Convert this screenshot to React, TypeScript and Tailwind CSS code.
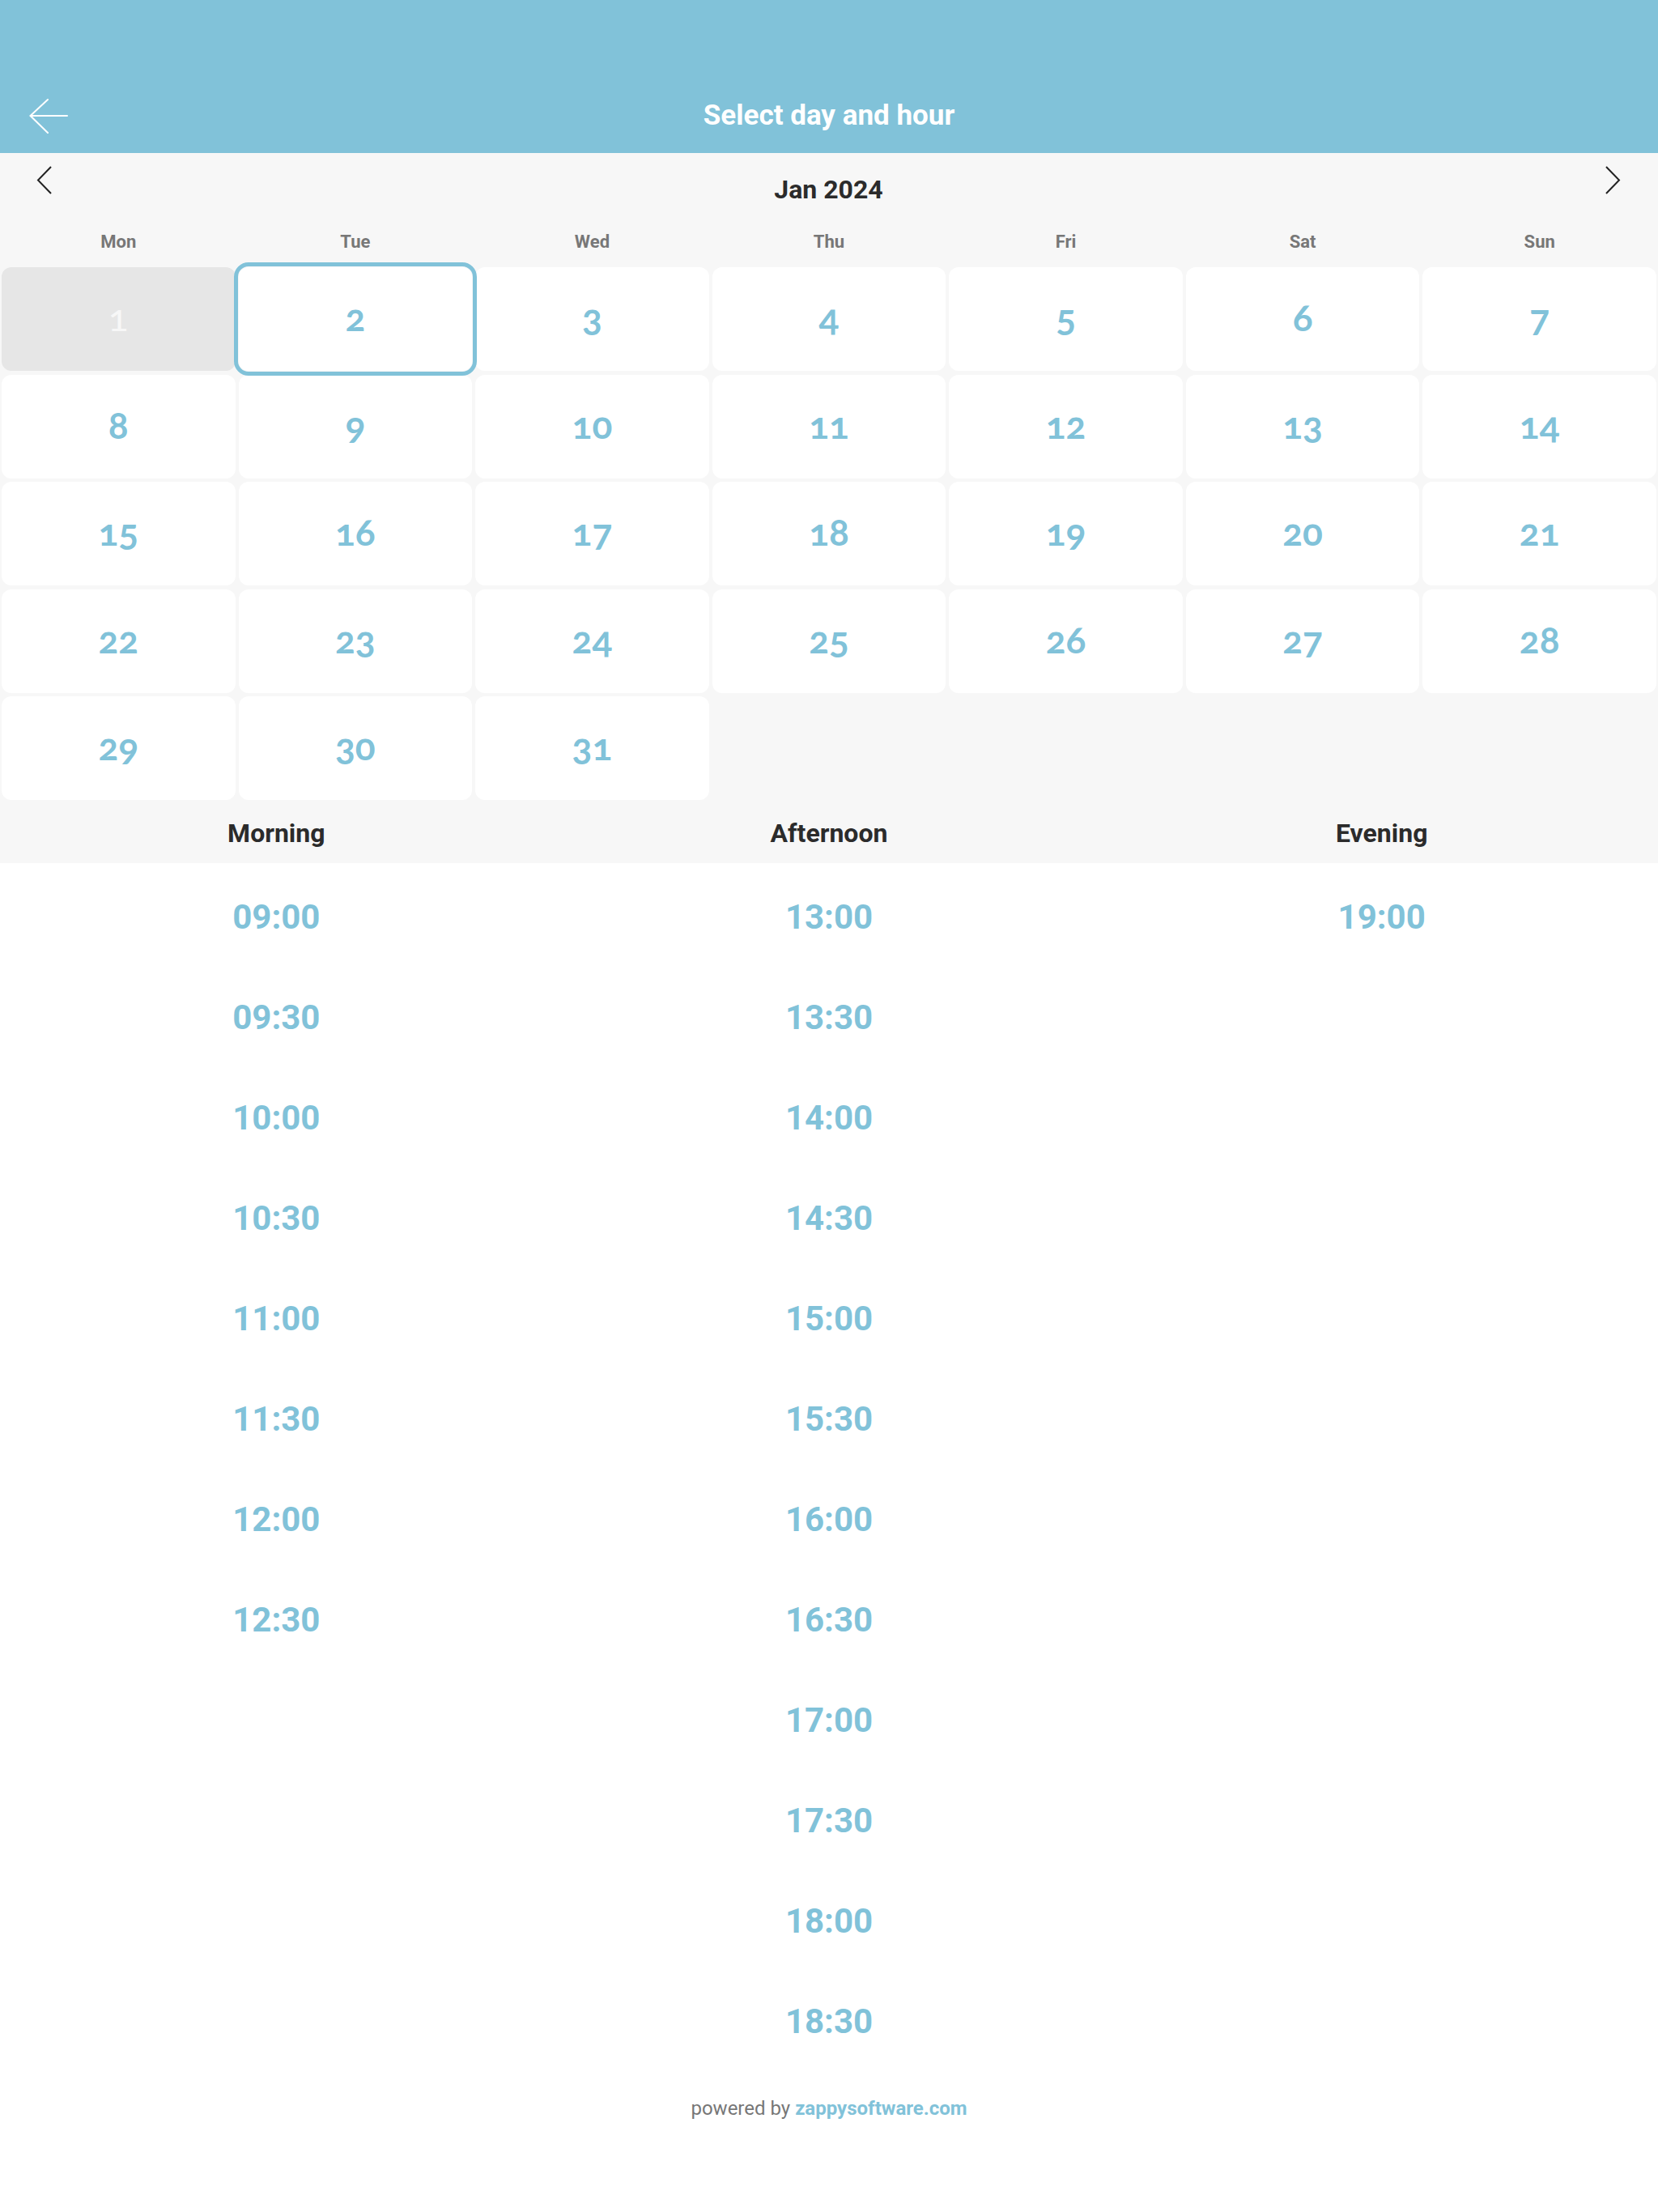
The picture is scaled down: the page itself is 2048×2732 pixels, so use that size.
import React from 'react';

const WEEKDAYS = ['Mon', 'Tue', 'Wed', 'Thu', 'Fri', 'Sat', 'Sun'];

const MORNING = ['09:00', '09:30', '10:00', '10:30', '11:00', '11:30', '12:00', '12:30'];
const AFTERNOON = [
  '13:00', '13:30', '14:00', '14:30', '15:00', '15:30',
  '16:00', '16:30', '17:00', '17:30', '18:00', '18:30',
];
const EVENING = ['19:00'];

const PERIODS = [
  { label: 'Morning', slots: MORNING },
  { label: 'Afternoon', slots: AFTERNOON },
  { label: 'Evening', slots: EVENING },
];

// January 2024 starts on a Monday, so no leading blanks
const DAYS = Array.from({ length: 31 }, (_, i) => i + 1);

const BackArrow = () => (
  <svg width="48" height="44" viewBox="0 0 48 44" fill="none" stroke="white" strokeWidth="2" strokeLinecap="round">
    <path d="M47 22H1.5M23 2 1.5 22 23 43" />
  </svg>
);

const Chevron = ({ dir }: { dir: 'left' | 'right' }) => (
  <svg width="20" height="36" viewBox="0 0 20 36" fill="none" stroke="#222" strokeWidth="2">
    <path d={dir === 'left' ? 'M18 1 2 17.5 18 34' : 'M2 1 18 17.5 2 34'} />
  </svg>
);

const DayCell = ({ day }: { day: number }) => {
  const disabled = day === 1;
  const selected = day === 2;
  return (
    <div
      className={`h-[128px] pb-[4px] rounded-[12px] flex items-center justify-center ${
        disabled ? 'bg-[#e6e6e6]' : 'bg-white'
      } ${selected ? 'relative z-10 outline-solid outline-[5px] outline-[#81c2d9] outline-offset-[1px]' : ''}`}
    >
      <span
        className={`font-[family-name:Lato,'Noto_Sans',sans-serif] oldstyle-nums text-[46px] leading-none ${
          disabled ? 'text-[#f7f7f7] font-normal' : 'text-[#81c2d9] font-bold'
        }`}
      >
        {day}
      </span>
    </div>
  );
};

export default function App() {
  return (
    <div className="min-h-[2732px] bg-white font-[family-name:Roboto,sans-serif]">
      {/* top bar */}
      <div className="h-[189px] bg-[#81c2d9] pt-[96px]">
        <div className="relative h-[93px] flex items-center justify-center">
          <div className="absolute left-[36px] top-1/2 -translate-y-1/2">
            <BackArrow />
          </div>
          <h1 className="text-white font-bold text-[35px] leading-none">Select day and hour</h1>
        </div>
      </div>

      {/* calendar */}
      <div className="bg-[#f7f7f7]">
        <div className="h-[86px] flex items-start justify-between pl-[45px] pr-[46px] pt-[16px]">
          <Chevron dir="left" />
          <span className="mt-[13px] text-[32px] leading-none font-bold text-[#2b2b2b]">Jan 2024</span>
          <Chevron dir="right" />
        </div>

        <div className="h-[55px] grid grid-cols-7 gap-x-[4px] px-[2px] pt-[13px]">
          {WEEKDAYS.map((d) => (
            <span key={d} className="text-center text-[22px] leading-[22px] font-bold text-[#777]">
              {d}
            </span>
          ))}
        </div>

        <div className="grid grid-cols-7 gap-x-[4px] gap-y-[4.5px] px-[2px]">
          {DAYS.map((d) => (
            <DayCell key={d} day={d} />
          ))}
        </div>

        <div className="h-[78px] grid grid-cols-3 pt-[25px]">
          {PERIODS.map((p) => (
            <span key={p.label} className="text-center text-[32px] leading-[32px] font-bold text-[#2b2b2b]">
              {p.label}
            </span>
          ))}
        </div>
      </div>

      {/* hour slots */}
      <div className="grid grid-cols-3 items-start pt-[5px]">
        {PERIODS.map((p) => (
          <div key={p.label} className="flex flex-col">
            {p.slots.map((t) => (
              <button
                key={t}
                className="h-[124px] flex items-center justify-center text-[42px] leading-none font-bold text-[#81c2d9]"
              >
                {t}
              </button>
            ))}
          </div>
        ))}
      </div>

      <p className="mt-[33px] text-center text-[24px] leading-[24px] text-[#777]">
        powered by <span className="font-bold text-[#81c2d9]">zappysoftware.com</span>
      </p>
    </div>
  );
}
